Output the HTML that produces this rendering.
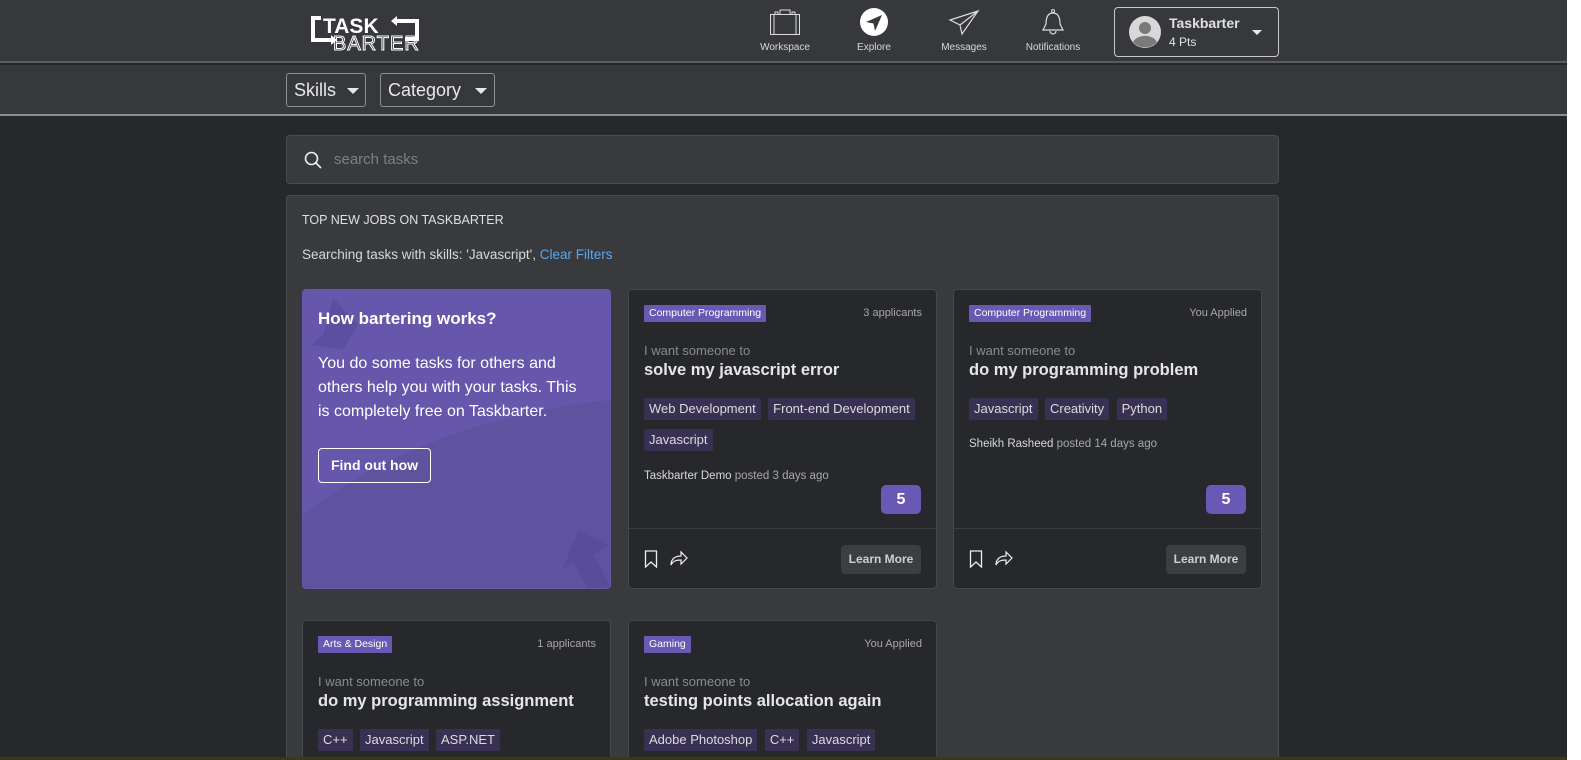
<!DOCTYPE html>
<html style="overflow:hidden;width:1581px;height:760px"><head><meta charset="utf-8"><style>
*{box-sizing:border-box;margin:0;padding:0}
html,body{overflow:hidden}
body{width:1581px;height:760px;background:#fff;font-family:"Liberation Sans",Arial,sans-serif;position:relative}
#main{position:absolute;left:0;top:0;width:1567px;height:760px;background:#27282c;overflow:hidden}
.hdr{position:absolute;left:0;top:0;width:1567px;height:63px;background:#36383c;border-bottom:2px solid #5a5c60}
.sub{position:absolute;left:0;top:65px;width:1567px;height:51px;background:#36383c;border-bottom:2px solid #8a8c90}
.nav{position:absolute;top:8px;text-align:center;color:#d8d8d8;font-size:10px;width:80px}
.nav svg{display:block;margin:0 auto 6px}
.dd{position:absolute;top:73px;height:34px;border:1px solid #8e9094;border-radius:3px;color:#e8e8e8;font-size:18px;line-height:32px;padding-left:7px}
.tri{position:absolute;width:0;height:0;border-left:6px solid transparent;border-right:6px solid transparent;border-top:6px solid #e8e8e8}
.search{position:absolute;left:286px;top:135px;width:993px;height:49px;background:#383a3e;border:1px solid #4a4c50;border-radius:4px}
.panel{position:absolute;left:286px;top:195px;width:993px;height:600px;background:#383a3e;border:1px solid #4a4c50;border-radius:4px}
.card{position:absolute;width:309px;height:300px;background:#27282c;border:1px solid #45474b;border-radius:4px}
.cat{position:absolute;left:15px;top:15px;height:17px;background:#6a58b5;color:#fff;font-size:10.5px;line-height:17px;padding:0 5px;border-radius:1px}
.app{position:absolute;right:14px;top:17px;color:#a8a8ac;font-size:11px}
.want{position:absolute;left:15px;top:53px;color:#8a8b8f;font-size:13px}
.ttl{position:absolute;left:15px;top:71px;color:#e6e6e6;font-size:16.5px;font-weight:bold}
.tags{position:absolute;left:15px;top:108px;width:285px}
.tags span{display:inline-block;background:#393153;color:#dcdcdc;font-size:13px;height:22px;line-height:22px;padding:0 5px;margin:0 3px 9px 0;border-radius:2px}
.post{position:absolute;left:15px;color:#a8a8ac;font-size:11.5px}
.post b{color:#d8d8d8;font-weight:normal}
.badge{position:absolute;right:15px;top:195px;width:40px;height:29px;background:#6a58b5;border-radius:5px;color:#fff;font-weight:bold;font-size:16px;text-align:center;line-height:29px}
.div{position:absolute;left:0;right:0;top:238px;border-top:1px solid #3a3c40}
.lm{position:absolute;right:15px;top:255px;width:80px;height:29px;background:#3c3e42;border-radius:4px;color:#cfcfcf;font-weight:bold;font-size:12px;text-align:center;line-height:29px}
.ic{position:absolute;top:260px}
</style></head><body><div id="main">
<div class="hdr">
 <div style="position:absolute;left:311px;top:13px;width:118px;height:38px">
  <svg width="118" height="38" viewBox="0 0 118 38"><path d="M10 5H2V27H20" fill="none" stroke="#fff" stroke-width="4"/><path d="M20 22l6 5-6 5z" fill="#fff"/><path d="M86 8h20v18h-12" fill="none" stroke="#fff" stroke-width="4"/><path d="M86 3l-6 5 6 5z" fill="#fff"/>
  <text x="12" y="20" fill="#fff" font-family="Liberation Sans" font-weight="bold" font-size="21">TASK</text>
  <text x="22" y="37" fill="none" stroke="#fff" stroke-width="1" font-family="Liberation Sans" font-size="20" letter-spacing="1">BARTER</text></svg>
 </div>
 <div class="nav" style="left:745px"><svg width="32" height="28" viewBox="0 0 32 28"><rect x="1.5" y="6.5" width="29" height="20" fill="none" stroke="#ddd"/><path d="M11 6V2h10v4M6 6V4h3v2M23 6V4h3v2M5 7v19M27 7v19" fill="none" stroke="#ddd"/></svg>Workspace</div>
 <div class="nav" style="left:834px"><svg width="32" height="28" viewBox="0 0 32 28"><circle cx="16" cy="14" r="14" fill="#fff"/><path d="M8 14L24 7 17 23 15.5 15.5z" fill="#36383c"/></svg>Explore</div>
 <div class="nav" style="left:924px"><svg width="32" height="28" viewBox="0 0 32 28"><path d="M2 12L30 3 14 26 12 17zM12 17L30 3" fill="none" stroke="#ddd" stroke-width="1.2"/></svg>Messages</div>
 <div class="nav" style="left:1013px"><svg width="32" height="28" viewBox="0 0 32 28"><path d="M16 5c-6 0-7 6-7 11l-3 6h20l-3-6c0-5-1-11-7-11zM13 23a3 3 0 0 0 6 0" fill="none" stroke="#ddd" stroke-width="1.2"/><circle cx="16" cy="3" r="1.5" fill="none" stroke="#ddd"/></svg>Notifications</div>
 <div style="position:absolute;left:1114px;top:7px;width:165px;height:50px;border:1px solid #c8c8c8;border-radius:4px">
  <svg style="position:absolute;left:14px;top:8px" width="32" height="32" viewBox="0 0 32 32"><circle cx="16" cy="16" r="16" fill="#d8d8d8"/><circle cx="16" cy="12" r="6" fill="#7a7a7a"/><path d="M4 26a13 10 0 0 1 24 0A16 16 0 0 1 4 26z" fill="#7a7a7a"/></svg>
  <div style="position:absolute;left:54px;top:7px;color:#e0e0e0;font-weight:bold;font-size:14px">Taskbarter</div>
  <div style="position:absolute;left:54px;top:27px;color:#e0e0e0;font-size:12px">4 Pts</div>
  <div class="tri" style="left:137px;top:22px;border-width:5px 5px 0 5px"></div>
 </div>
</div>
<div class="sub"></div>
<div class="dd" style="left:286px;width:80px">Skills<div class="tri" style="left:60px;top:14px"></div></div>
<div class="dd" style="left:380px;width:115px">Category<div class="tri" style="left:94px;top:14px"></div></div>
<div class="search"><svg style="position:absolute;left:17px;top:15px" width="18" height="18" viewBox="0 0 18 18"><circle cx="7.5" cy="7.5" r="6" fill="none" stroke="#eee" stroke-width="1.6"/><path d="M12 12l5 5" stroke="#eee" stroke-width="1.6"/></svg><div style="position:absolute;left:47px;top:15px;color:#7d7f83;font-size:15px">search tasks</div></div>
<div class="panel">
 <div style="position:absolute;left:15px;top:17px;color:#e0e0e0;font-size:12.5px">TOP NEW JOBS ON TASKBARTER</div>
 <div style="position:absolute;left:15px;top:51px;color:#d8d8d8;font-size:13.5px">Searching tasks with skills: 'Javascript', <span style="color:#5aa6ee">Clear Filters</span></div>
</div>
<div class="card" style="left:302px;top:289px;background:#6656ac;border-color:#6656ac;overflow:hidden">
 <svg style="position:absolute;left:0;top:0" width="309" height="300"><path d="M0 225C80 160 200 120 309 110V300H0z" fill="#5f529e"/><path d="M30 8L55 35 40 60 8 55 20 45z" fill="#5d4fa0"/><path d="M275 240l30 15-15 10 20 35h-25l-15-30-10 10z" fill="#594c99"/></svg>
 <div style="position:absolute;left:15px;top:19px;color:#fff;font-weight:bold;font-size:17px">How bartering works?</div>
 <div style="position:absolute;left:15px;top:62px;white-space:nowrap;color:#fff;font-size:16px;line-height:24px">You do some tasks for others and<br>others help you with your tasks. This<br>is completely free on Taskbarter.</div>
 <div style="position:absolute;left:15px;top:158px;width:113px;height:35px;border:1px solid #fff;border-radius:4px;color:#fff;font-weight:bold;font-size:14px;text-align:center;line-height:33px">Find out how</div>
</div>
<div class="card" style="left:628px;top:289px">
 <div class="cat">Computer Programming</div><div class="app">3 applicants</div>
 <div class="want">I want someone to</div><div class="ttl">solve my javascript error</div>
 <div class="tags"><span>Web Development</span> <span>Front-end Development</span><br><span>Javascript</span></div>
 <div class="post" style="top:180px"><b>Taskbarter Demo</b> posted 3 days ago</div>
 <div class="badge">5</div><div class="div"></div>
 <svg class="ic" style="left:15px" width="45" height="18" viewBox="0 0 45 18"><path d="M1.5 1h11v16l-5.5-5-5.5 5z" fill="none" stroke="#eee" stroke-width="1.3"/><path d="M27 15c0-6 4-9 10-9V2l6 6-6 6v-4c-5 0-8 1-10 5z" fill="none" stroke="#eee" stroke-width="1.2"/></svg>
 <div class="lm">Learn More</div>
</div>
<div class="card" style="left:953px;top:289px">
 <div class="cat">Computer Programming</div><div class="app">You Applied</div>
 <div class="want">I want someone to</div><div class="ttl">do my programming problem</div>
 <div class="tags"><span>Javascript</span> <span>Creativity</span> <span>Python</span></div>
 <div class="post" style="top:148px"><b>Sheikh Rasheed</b> posted 14 days ago</div>
 <div class="badge">5</div><div class="div"></div>
 <svg class="ic" style="left:15px" width="45" height="18" viewBox="0 0 45 18"><path d="M1.5 1h11v16l-5.5-5-5.5 5z" fill="none" stroke="#eee" stroke-width="1.3"/><path d="M27 15c0-6 4-9 10-9V2l6 6-6 6v-4c-5 0-8 1-10 5z" fill="none" stroke="#eee" stroke-width="1.2"/></svg>
 <div class="lm">Learn More</div>
</div>
<div class="card" style="left:302px;top:620px">
 <div class="cat">Arts &amp; Design</div><div class="app">1 applicants</div>
 <div class="want">I want someone to</div><div class="ttl">do my programming assignment</div>
 <div class="tags"><span>C++</span> <span>Javascript</span> <span>ASP.NET</span></div>
</div>
<div class="card" style="left:628px;top:620px">
 <div class="cat">Gaming</div><div class="app">You Applied</div>
 <div class="want">I want someone to</div><div class="ttl">testing points allocation again</div>
 <div class="tags"><span>Adobe Photoshop</span> <span>C++</span> <span>Javascript</span></div>
</div>
<div style="position:absolute;left:0;top:757px;width:1567px;height:3px;background:#3d3718"></div>
</div></body></html>
